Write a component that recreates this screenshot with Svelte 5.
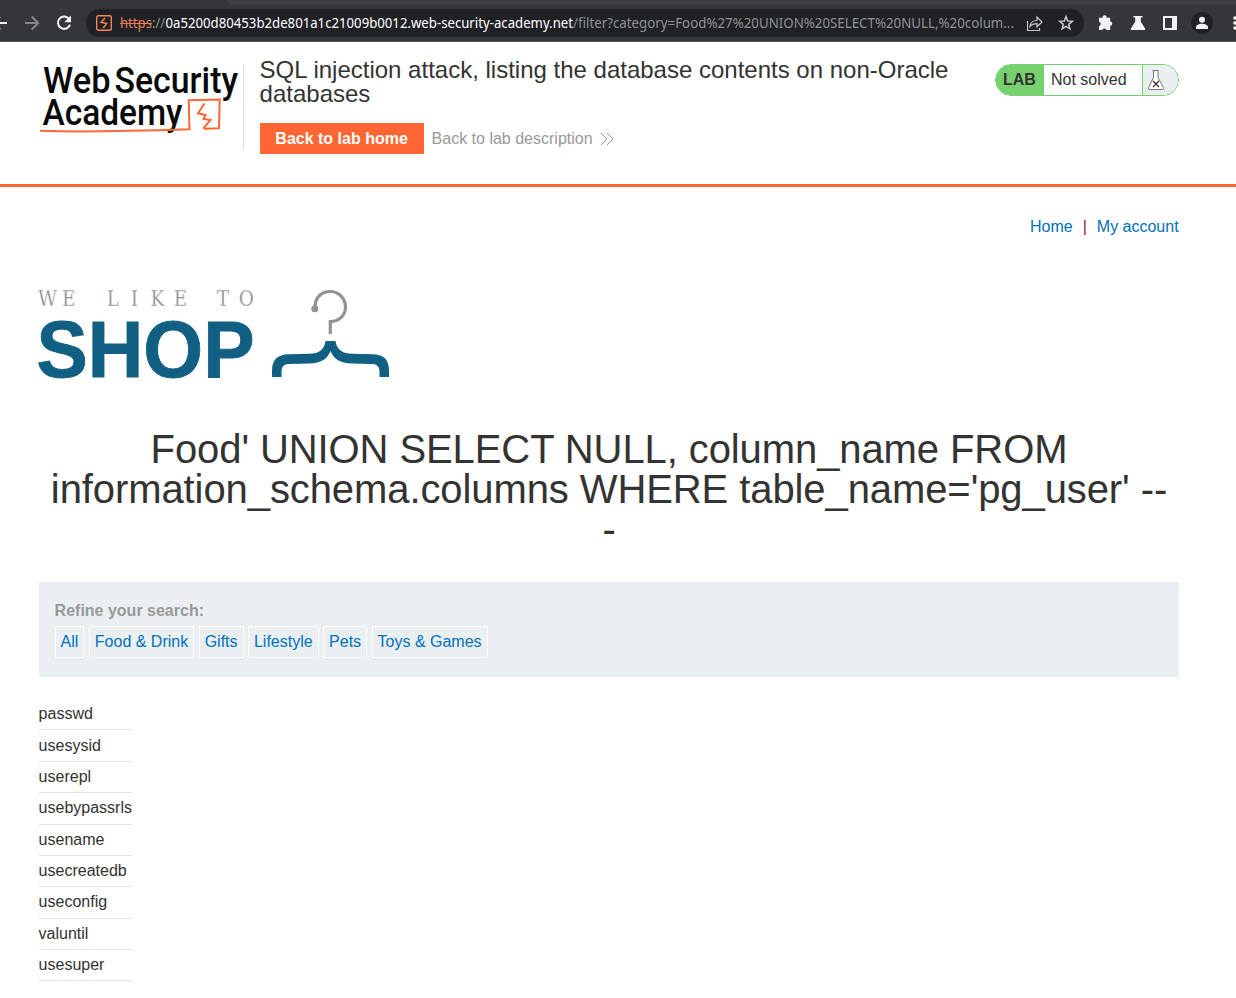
<script>
  const categories = ['All', 'Food & Drink', 'Gifts', 'Lifestyle', 'Pets', 'Toys & Games'];
  const columns = ['passwd', 'usesysid', 'userepl', 'usebypassrls', 'usename', 'usecreatedb', 'useconfig', 'valuntil', 'usesuper'];
</script>

<div class="page">
  <div class="browser">
    <div class="tabs"><div class="tab-edge"></div></div>
    <div class="toolbar">
      <svg class="nav" width="86" height="36" viewBox="0 0 86 36" fill="none" stroke-width="2">
        <path d="M-6 18H7M0 11.500l-6.500 6.500 6.500 6.500" stroke="#eceef0" />
        <path d="M25 18h13M31.700 11.500l6.500 6.500-6.500 6.500" stroke="#85878a" />
        <path d="M69.300 14.200A6.200 6.200 0 1 0 70 19.700" stroke="#f1f3f4" />
        <path d="M71 10.500v6.700h-6.700z" fill="#f1f3f4" />
      </svg>
      <div class="address">
        <svg class="site" width="16" height="16" viewBox="0 0 16 16" fill="none">
          <rect x=".7" y=".7" width="14.600" height="14.600" rx="1.500" stroke="#f58457" stroke-width="1.400" />
          <path d="M8.900 3L5 7.400l5.600 1.200L7.300 13" stroke="#f58457" stroke-width="1.500" />
        </svg>
        <svg class="url" width="900" height="28" viewBox="0 0 900 28">
          <text x="0" y="19" fill="#e77b5b" textLength="32" lengthAdjust="spacingAndGlyphs">https</text>
          <path d="M0 14.500h32" stroke="#e77b5b" stroke-width="1" />
          <text x="32" y="19" fill="#8e9195" textLength="13" lengthAdjust="spacingAndGlyphs">://</text>
          <text x="45.500" y="19" fill="#fff" textLength="407.500" lengthAdjust="spacingAndGlyphs">0a5200d80453b2de801a1c21009b0012.web-security-academy.net</text>
          <text x="453" y="19" fill="#8e9195" textLength="441" lengthAdjust="spacingAndGlyphs">/filter?category=Food%27%20UNION%20SELECT%20NULL,%20colum...</text>
        </svg>
        <svg class="actions" width="52" height="28" viewBox="0 0 52 28" fill="none" stroke="#c4c7c9" stroke-width="1.200">
          <path d="M3.500 12v9.500h12V19M6 17.500c.4-4.200 3.200-6 7-6V8l5 5-5 4.800V14.600c-3.300 0-5.300.8-7 2.900z" />
          <path d="M42 7.600l1.700 4.400 4.600.3-3.600 3 1.200 4.500-3.900-2.500-3.900 2.500 1.200-4.500-3.600-3 4.600-.3z" stroke-width="1.500" />
        </svg>
      </div>
      <svg class="extensions" width="152" height="36" viewBox="0 0 152 36" fill="#f1f3f4">
        <path d="M15 12.800h3.700a2 2 0 1 1 3.800 0h3.700v3.800a2.100 2.100 0 1 1 0 4.200V25h-3.800a2.100 2.100 0 0 0-4 0H15v-3.900a2.200 2.200 0 0 0 0-4.300z" />
        <path d="M49.500 11h9v1.500h-1.700v4.300l4.300 6.700q.8 1.500-.8 1.500H47.700q-1.600 0-.8-1.500l4.300-6.700v-4.300h-1.700z" />
        <path fill-rule="evenodd" d="M79 11h14v14H79zM81 13v10h7v-10z" />
        <circle cx="118" cy="18" r="11" fill="#202124" />
        <circle cx="118" cy="14.800" r="3" />
        <path d="M112 24v-1.700c0-2.200 3-3.500 6-3.500s6 1.300 6 3.500V24z" />
        <circle cx="151" cy="13" r="1.800" /><circle cx="151" cy="18" r="1.800" /><circle cx="151" cy="23" r="1.800" />
      </svg>
    </div>
  </div>

  <header>
    <svg class="academy" width="204" height="86" viewBox="39 64 204 86">
      <g font-family="Roboto, sans-serif" font-size="36" font-weight="500" fill="#0a0a0a">
        <text x="43" y="93" textLength="67.500" lengthAdjust="spacingAndGlyphs">Web</text>
        <text x="114.500" y="93" textLength="123.500" lengthAdjust="spacingAndGlyphs">Security</text>
        <text x="42.500" y="125" textLength="140" lengthAdjust="spacingAndGlyphs">Academy</text>
      </g>
      <g fill="none" stroke="#ff6633" stroke-width="2">
        <path d="M40 130.800c23 .8 86 .5 149.500-1.500l-.8-29 31-.8-.7 28.700-15 .5" />
        <path d="M204.500 103.500L198 113.300l7.500 1.700-2 4 7 1-7.300 8.700" />
      </g>
    </svg>
    <div class="heading">
      <h2>SQL injection attack, listing the database contents on non-Oracle<br />databases</h2>
      <div class="links">
        <a class="button" href="#home">Back to lab home</a>
        <a class="description" href="#lab">Back to lab description
          <svg width="14" height="14" viewBox="0 0 14 14" fill="none" stroke="#999" stroke-width="1"><path d="M1 1l6 6-6 6M7 1l6 6-6 6" /></svg>
        </a>
      </div>
    </div>
    <div class="status">
      <b>LAB</b><span>Not solved</span>
      <i>
        <svg width="18" height="22" viewBox="0 0 18 22" fill="#fff" stroke="#777">
          <path d="M5.500 1.500h6M6.500 1.500v7L1.500 18.500q-.5 2 1 2h13q1.500 0 1-2L11 8.500v-7" />
          <path d="M6 12l6 6m0-6l-6 6" stroke="#333" stroke-width="1.300" />
        </svg>
      </i>
    </div>
  </header>

  <main>
    <nav><a href="#home">Home</a><span>|</span><a href="#account">My account</a></nav>
    <svg class="shop" width="352" height="92" viewBox="38 288 352 92">
      <text transform="scale(.86 1)" x="44.300 72 124 152 175 202 252 277.500" y="306" font-family="DejaVu Serif, serif" font-size="21.500" fill="#8b8d8f" stroke="#fff" stroke-width=".25">WELIKETO</text>
      <text x="36.500" y="376.500" font-family="Liberation Sans, sans-serif" font-weight="700" font-size="79" fill="#125f84" stroke="#125f84" stroke-width=".9" textLength="218" lengthAdjust="spacingAndGlyphs">SHOP</text>
      <path d="M315 307C315 297 322 291.500 330 291.500c9 0 15.500 7 15.500 15.500S339 321.500 330.300 321.500v12.500" fill="none" stroke="#919395" stroke-width="3.200" />
      <circle cx="314.800" cy="308.700" r="3.500" fill="#919395" />
      <path d="M325.500 341h10c1 8.500 7 12.600 17 12.800l20 .5c12 .3 16.500 5.700 16.500 16.700v6h-9.500v-5c0-5.500-2.500-8-8-8l-20-.5c-11-.3-18-4.500-21-12.500-3 8-10 12.200-21 12.500l-20 .5c-5.500 0-8 2.500-8 8v5h-9.500v-6c0-11 5-16.400 17-16.700l20-.5c10-.2 15.500-4.300 16.500-12.800z" fill="#125f84" />
    </svg>
    <h1>Food' UNION SELECT NULL, column_name FROM<br />information_schema.columns WHERE table_name='pg_user' --<br />-</h1>
    <section class="filters">
      <label for="tags">Refine your search:</label>
      <div class="tags" id="tags">
        {#each categories as category}<a href="#filter">{category}</a>{/each}
      </div>
    </section>
    <table>
      <tbody>
        {#each columns as column}
          <tr><th>{column}</th></tr>
        {/each}
      </tbody>
    </table>
  </main>
</div>

<style>
  :global(body) { margin: 0; background: #fff; }
  .page { width: 1236px; height: 998px; overflow: hidden; font: 16px "Liberation Sans", Arial, sans-serif; color: #333332; }
  .page :is(a, b, span, label, svg) { box-sizing: border-box; }
  a { color: #0071bb; text-decoration: none; }
  svg { display: block; flex: none; overflow: visible; }
  .browser { height: 42px; background: #35363a; box-sizing: border-box; border-bottom: 1px solid #55575b; }
  .tabs { height: 5px; background: #35363a; }
  .tab-edge { height: 5px; margin-left: 227px; background: #3c4043; border-radius: 0 0 0 5px; }
  .toolbar { display: flex; height: 36px; }
  .address { width: 998px; height: 28px; margin-top: 4px; border-radius: 14px; background: #202124; display: flex; align-items: center; flex: none; }
  .site { margin-left: 10px; }
  .url { margin-left: 8px; font: 14px "Noto Sans", "Open Sans", sans-serif; }
  .actions { margin-left: 4px; }
  header { height: 145px; box-sizing: border-box; border-bottom: 3px solid #ff6633; padding: 22px 57px 0 39px; display: flex; align-items: flex-start; }
  .academy { border-right: 1px solid #ddd; box-sizing: content-box !important; }
  .heading { margin-left: 15.600px; margin-right: .400px; width: 735px; }
  h2 { margin: -6px 0 17px; font-size: 24px; line-height: 24px; font-weight: 400; white-space: nowrap; }
  .links { display: flex; align-items: center; }
  .button { width: 164px; height: 31px; line-height: 31px; text-align: center; background: #ff6633; color: #fff; font-weight: 700; white-space: nowrap; }
  .description { margin-left: 8px; color: #999; display: flex; align-items: center; gap: 7px; white-space: nowrap; }
  .status { width: 184px; height: 32px; box-sizing: border-box; border: 1px solid #75d06d; border-radius: 16px; overflow: hidden; display: flex; line-height: 30px; background: #fff; }
  .status b { width: 48px; background: #75d06d; text-align: center; padding-right: 1px; }
  .status span { width: 99px; padding-left: 7px; border-right: 1px solid #75d06d; white-space: nowrap; }
  .status i { flex: 1; background: #eaeff2; padding: 4px 0 0 4px; }
  main { padding: 0 57px 0 39px; }
  nav { display: flex; justify-content: flex-end; padding: 31px .400px 0 0; line-height: 18px; gap: 10px; }
  nav span { color: #8b1a3a; }
  .shop { margin: 52px 0 0 -1px; }
  h1 { margin: 49px 0 33px; font-size: 40px; line-height: 40px; font-weight: 400; text-align: center; white-space: nowrap; letter-spacing: -.09px; }
  .filters { height: 95px; box-sizing: border-box; background: #eaeff2; padding: 20px 15.600px; }
  label { display: block; color: #999; font-weight: 700; line-height: 18px; }
  .tags { display: flex; gap: 4.450px; padding-top: 6px; }
  .tags a { border: 1px solid #fff; padding: 0 5px; height: 32px; line-height: 30px; white-space: nowrap; }
  table { border-collapse: collapse; margin-top: 22px; margin-left: -.400px; }
  th { font-weight: 400; text-align: left; padding: 0; height: 30.380px; border-bottom: 1px solid #e3e3e3; }
</style>
